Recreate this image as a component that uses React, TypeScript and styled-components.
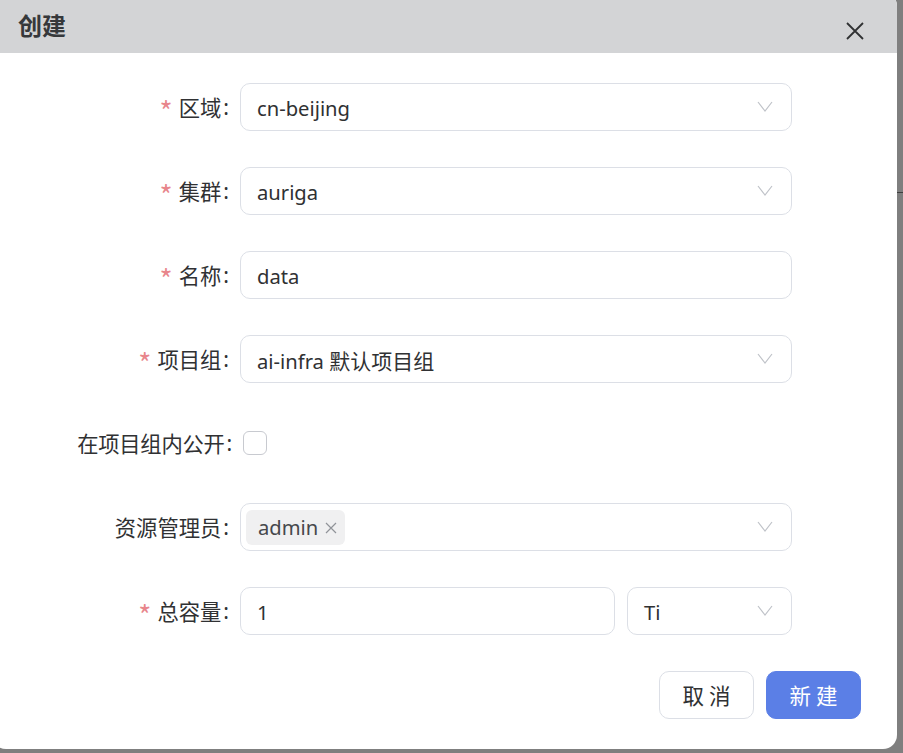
import React from "react";
import styled, { createGlobalStyle } from "styled-components";

const Global = createGlobalStyle`
  html, body { margin: 0; padding: 0; }
  body { font-family: "Noto Sans", "Noto Sans CJK SC", sans-serif; overflow: hidden; }
`;

const Backdrop = styled.div`
  width: 903px;
  height: 753px;
  overflow: hidden;
  background: linear-gradient(to bottom, #7f7f7f 192px, #3f3f3f 192px, #3f3f3f 193px, #7f7f7f 193px);
`;

const Modal = styled.div`
  width: 905px;
  height: 757px;
  margin: -8px 0 0 -8px;
  background: #fff;
  border-radius: 14px;
  overflow: hidden;
  display: flex;
  flex-direction: column;
`;

const Header = styled.div`
  height: 60.5px;
  flex: none;
  box-sizing: border-box;
  padding: 8px 33px 0 26px;
  background: #d3d4d6;
  display: flex;
  align-items: center;
  justify-content: space-between;
`;

const Title = styled.div`
  font-size: 24px;
  font-weight: 700;
  color: #36383b;
  line-height: 38px;
`;

const CloseButton = styled.button`
  border: 0;
  background: none;
  padding: 0;
  width: 18px;
  height: 18px;
  margin-top: 10px;
  color: #303133;
  display: flex;
`;

const Form = styled.div`
  display: flex;
  flex-direction: column;
  gap: 36px;
  padding: 30.5px 0 0 8px;
`;

const Row = styled.div`
  display: grid;
  grid-template-columns: 240px 552px;
  height: 48px;
  align-items: center;
`;

const Label = styled.label<{ $wide?: boolean }>`
  font-size: 21.3px;
  letter-spacing: ${(p) => (p.$wide ? "-0.25px" : "0")};
  color: #303133;
  text-align: right;
  white-space: nowrap;
  padding-right: ${(p) => (p.$wide ? "8px" : "11px")};
  margin-top: -2px;
  display: flex;
  justify-content: flex-end;
  align-items: center;
`;

const Colon = styled.span`
  padding-left: 2px;
`;

const Star = styled.span`
  color: #e8868c;
  margin-right: 6px;
  font-size: 28px;
  font-family: "Noto Sans CJK SC", sans-serif;
  line-height: 20px;
  padding-top: 8px;
`;

const Field = styled.div`
  box-sizing: border-box;
  height: 48px;
  flex: 1;
  min-width: 0;
  border: 1px solid #dcdfe6;
  border-radius: 10px;
  padding: 1px 18px 0 16px;
  display: flex;
  align-items: center;
  justify-content: space-between;
  font-size: 20.2px;
  color: #303133;
  background: #fff;
`;

const Cjk = styled.span`
  font-size: 21px;
`;

const TagField = styled(Field)`
  padding-left: 5px;
`;

const ChevronIcon = styled.svg`
  flex: none;
  width: 16px;
  height: 11px;
  color: #bfc2c8;
  margin-top: -3px;
`;

const Tag = styled.span`
  height: 35px;
  width: 99px;
  box-sizing: border-box;
  border-radius: 6px;
  background: #f0f0f1;
  padding: 0 8px 2px 12px;
  display: flex;
  align-items: center;
  justify-content: space-between;
  color: #46484c;
`;

const TagCloseIcon = styled.svg`
  width: 12px;
  height: 12px;
  margin-top: 2px;
  color: #909399;
`;

const Check = styled.span`
  display: block;
  width: 24px;
  height: 24px;
  box-sizing: border-box;
  margin-left: 3px;
  border: 1px solid #c8cad0;
  border-radius: 6px;
`;

const Split = styled.div`
  display: flex;
  gap: 12px;
`;

const Unit = styled(Field)`
  flex: none;
  width: 165px;
`;

const Footer = styled.div`
  display: flex;
  justify-content: flex-end;
  gap: 12px;
  margin-top: 36px;
  padding-right: 36px;
`;

const Button = styled.button<{ $primary?: boolean }>`
  box-sizing: border-box;
  width: 95px;
  height: 48px;
  border-radius: 10px;
  border: 1px solid ${(p) => (p.$primary ? "#5b7fe6" : "#dcdfe6")};
  background: ${(p) => (p.$primary ? "#5b7fe6" : "#fff")};
  color: ${(p) => (p.$primary ? "#fff" : "#303133")};
  font: inherit;
  font-size: 21.5px;
  letter-spacing: 5px;
  padding: 0 0 2px 5px;
`;

const Req = ({ children }: { children: React.ReactNode }) => (
  <Label>
    <Star>*</Star>
    {children}
    <Colon>:</Colon>
  </Label>
);

const Arrow = () => (
  <ChevronIcon viewBox="0 0 16 11" fill="none" stroke="currentColor" strokeWidth="1.2">
    <path d="M1 1l7 9 7-9" />
  </ChevronIcon>
);

export default function App() {
  return (
    <Backdrop>
      <Global />
      <Modal>
        <Header>
          <Title>创建</Title>
          <CloseButton aria-label="关闭">
            <svg width="18" height="18" viewBox="0 0 18 18" fill="none" stroke="currentColor" strokeWidth="1.8">
              <path d="M1 1l16 16M17 1L1 17" />
            </svg>
          </CloseButton>
        </Header>
        <Form>
          <Row>
            <Req>区域</Req>
            <Field>cn-beijing<Arrow /></Field>
          </Row>
          <Row>
            <Req>集群</Req>
            <Field>auriga<Arrow /></Field>
          </Row>
          <Row>
            <Req>名称</Req>
            <Field>data</Field>
          </Row>
          <Row>
            <Req>项目组</Req>
            <Field><span>ai-infra <Cjk>默认项目组</Cjk></span><Arrow /></Field>
          </Row>
          <Row>
            <Label $wide>在项目组内公开<Colon>:</Colon></Label>
            <Check />
          </Row>
          <Row>
            <Label>资源管理员<Colon>:</Colon></Label>
            <TagField>
              <Tag>
                admin
                <TagCloseIcon viewBox="0 0 12 12" fill="none" stroke="currentColor" strokeWidth="1.2">
                  <path d="M1 1l10 10M11 1L1 11" />
                </TagCloseIcon>
              </Tag>
              <Arrow />
            </TagField>
          </Row>
          <Row>
            <Req>总容量</Req>
            <Split>
              <Field>1</Field>
              <Unit>Ti<Arrow /></Unit>
            </Split>
          </Row>
        </Form>
        <Footer>
          <Button>取消</Button>
          <Button $primary>新建</Button>
        </Footer>
      </Modal>
    </Backdrop>
  );
}
